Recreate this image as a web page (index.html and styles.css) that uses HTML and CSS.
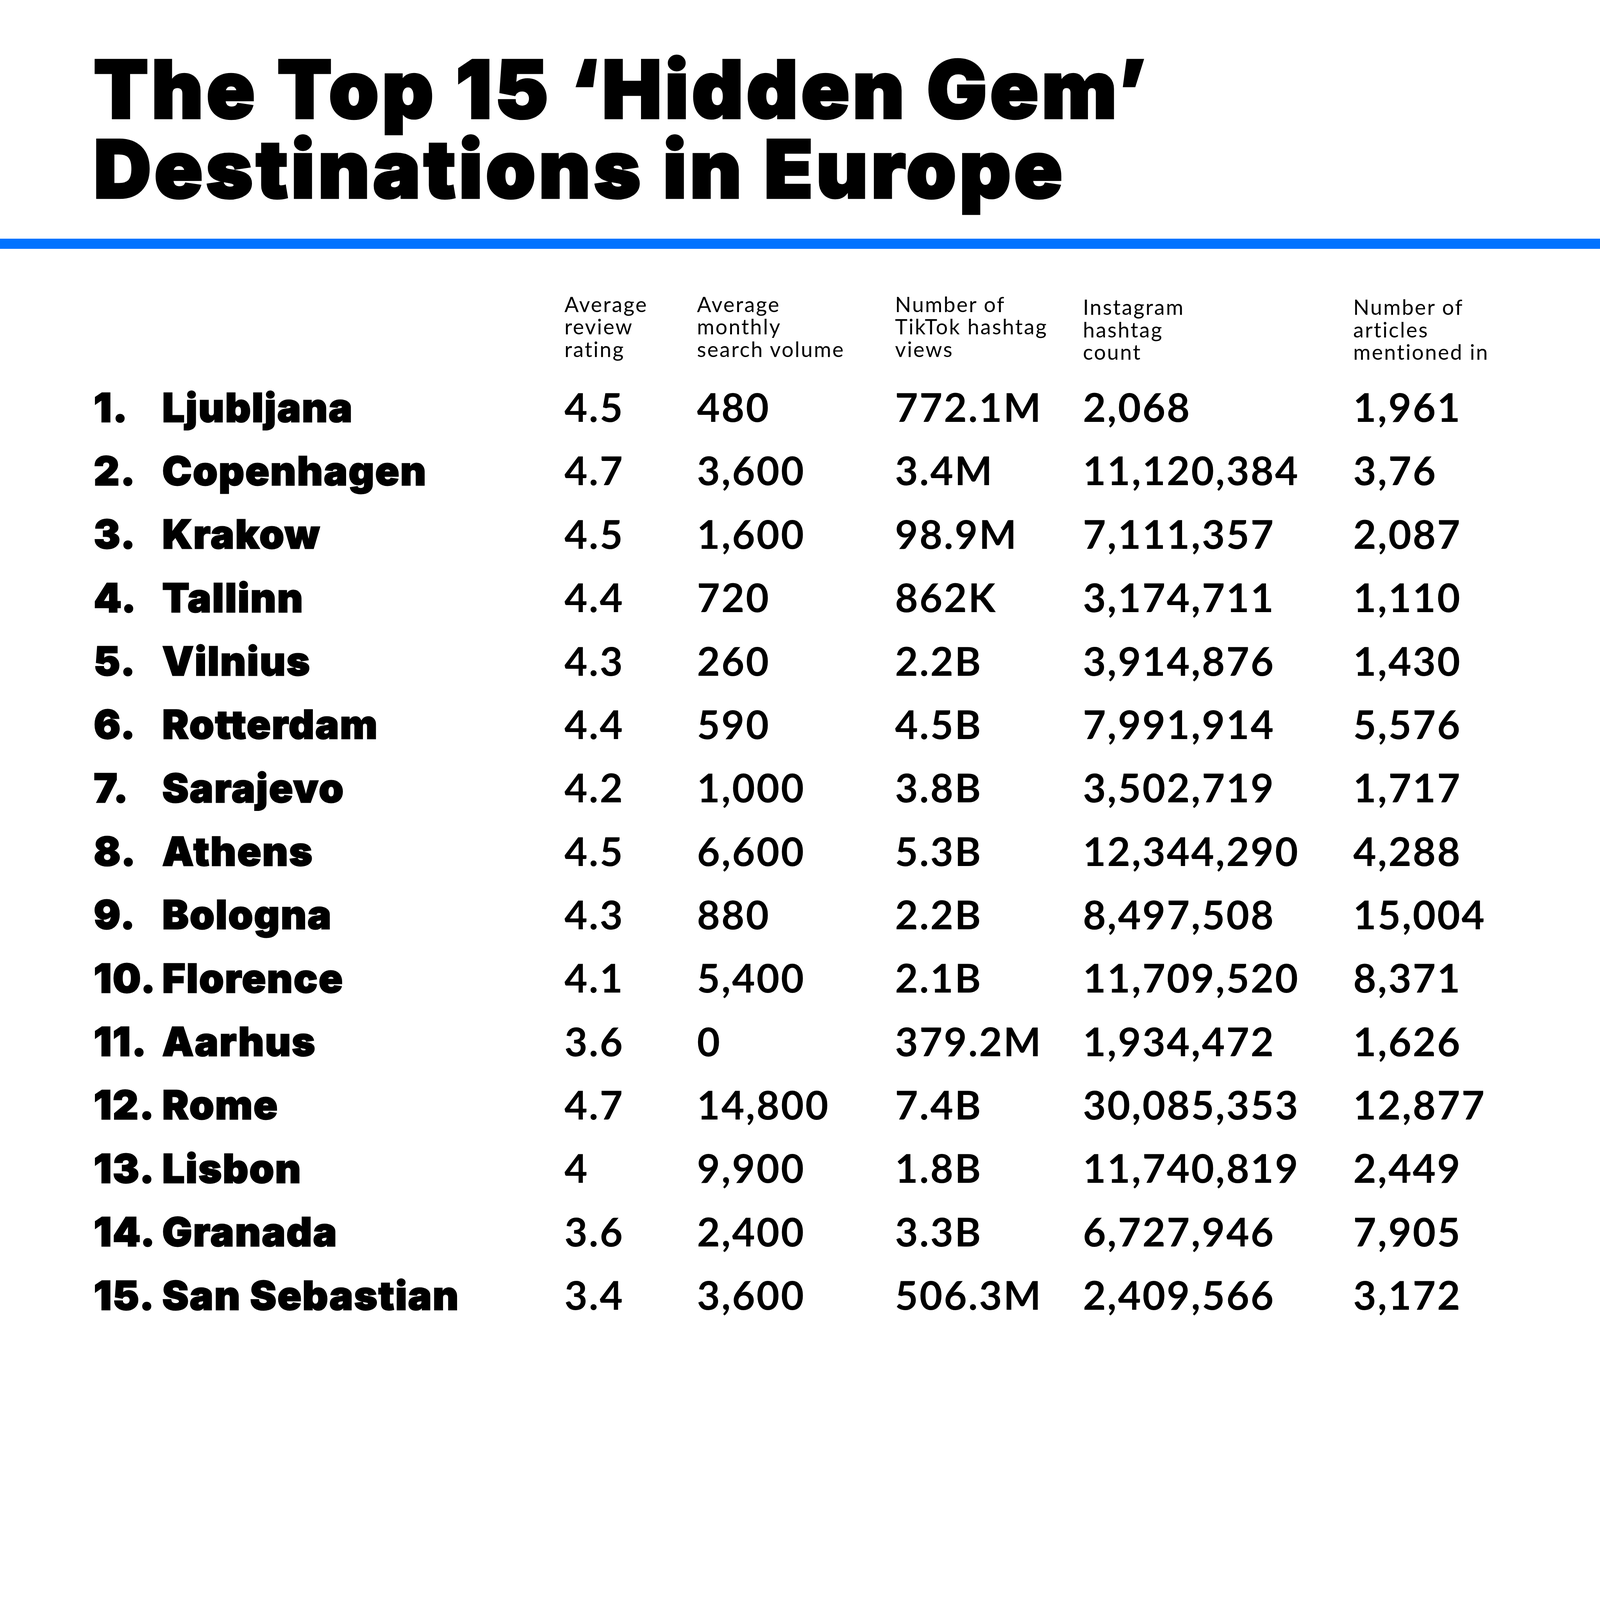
FILE: index.html
```html
<!DOCTYPE html>
<html lang="en">
<head>
<meta charset="utf-8">
<title>The Top 15 'Hidden Gem' Destinations in Europe</title>
<link rel="stylesheet" href="styles.css">
</head>
<body>
<div class="page">
  <h1 class="title"><span class="tline">The Top 15 ‘Hidden Gem’</span><span class="tline">Destinations in Europe</span></h1>
  <div class="bar"></div>
  <div class="table">
    <div class="head">
      <div></div><div></div>
      <div class="h">Average<br>review<br>rating</div>
      <div class="h">Average<br>monthly<br>search volume</div>
      <div class="h">Number of<br>TikTok hashtag<br>views</div>
      <div class="h low">Instagram<br>hashtag<br>count</div>
      <div class="h low">Number of<br>articles<br>mentioned in</div>
    </div>
    <div class="row"><span class="rank">1.</span><span class="name">Ljubljana</span><span class="num">4.5</span><span class="num">480</span><span class="num">772.1M</span><span class="num">2,068</span><span class="num">1,961</span></div>
    <div class="row"><span class="rank">2.</span><span class="name">Copenhagen</span><span class="num">4.7</span><span class="num">3,600</span><span class="num">3.4M</span><span class="num">11,120,384</span><span class="num">3,76</span></div>
    <div class="row"><span class="rank">3.</span><span class="name">Krakow</span><span class="num">4.5</span><span class="num">1,600</span><span class="num">98.9M</span><span class="num">7,111,357</span><span class="num">2,087</span></div>
    <div class="row"><span class="rank">4.</span><span class="name">Tallinn</span><span class="num">4.4</span><span class="num">720</span><span class="num">862K</span><span class="num">3,174,711</span><span class="num">1,110</span></div>
    <div class="row"><span class="rank">5.</span><span class="name">Vilnius</span><span class="num">4.3</span><span class="num">260</span><span class="num">2.2B</span><span class="num">3,914,876</span><span class="num">1,430</span></div>
    <div class="row"><span class="rank">6.</span><span class="name">Rotterdam</span><span class="num">4.4</span><span class="num">590</span><span class="num">4.5B</span><span class="num">7,991,914</span><span class="num">5,576</span></div>
    <div class="row"><span class="rank">7.</span><span class="name">Sarajevo</span><span class="num">4.2</span><span class="num">1,000</span><span class="num">3.8B</span><span class="num">3,502,719</span><span class="num">1,717</span></div>
    <div class="row"><span class="rank">8.</span><span class="name">Athens</span><span class="num">4.5</span><span class="num">6,600</span><span class="num">5.3B</span><span class="num">12,344,290</span><span class="num">4,288</span></div>
    <div class="row"><span class="rank">9.</span><span class="name">Bologna</span><span class="num">4.3</span><span class="num">880</span><span class="num">2.2B</span><span class="num">8,497,508</span><span class="num">15,004</span></div>
    <div class="row"><span class="rank">10.</span><span class="name">Florence</span><span class="num">4.1</span><span class="num">5,400</span><span class="num">2.1B</span><span class="num">11,709,520</span><span class="num">8,371</span></div>
    <div class="row"><span class="rank">11.</span><span class="name">Aarhus</span><span class="num">3.6</span><span class="num">0</span><span class="num">379.2M</span><span class="num">1,934,472</span><span class="num">1,626</span></div>
    <div class="row"><span class="rank">12.</span><span class="name">Rome</span><span class="num">4.7</span><span class="num">14,800</span><span class="num">7.4B</span><span class="num">30,085,353</span><span class="num">12,877</span></div>
    <div class="row"><span class="rank">13.</span><span class="name">Lisbon</span><span class="num">4</span><span class="num">9,900</span><span class="num">1.8B</span><span class="num">11,740,819</span><span class="num">2,449</span></div>
    <div class="row"><span class="rank">14.</span><span class="name">Granada</span><span class="num">3.6</span><span class="num">2,400</span><span class="num">3.3B</span><span class="num">6,727,946</span><span class="num">7,905</span></div>
    <div class="row"><span class="rank">15.</span><span class="name">San Sebastian</span><span class="num">3.4</span><span class="num">3,600</span><span class="num">506.3M</span><span class="num">2,409,566</span><span class="num">3,172</span></div>
  </div>
</div>
</body>
</html>
```
FILE: styles.css
```css
/* 1rem = 1/50 of the viewport width (100px on a 5000px wide window) */
html {
  font-size: 2vw;
}
html, body {
  margin: 0;
  padding: 0;
  background: #ffffff;
}
*, *::before, *::after {
  box-sizing: border-box;
}
.page {
  width: 100%;
  height: 42.92rem;
  background: #ffffff;
  color: #000000;
  font-family: "Lato", "Liberation Sans", sans-serif;
  overflow: hidden;
}
.title {
  margin: 0;
  padding: 1.54rem 0 0 2.93rem;
  height: 6.52rem;
  display: flex;
  flex-direction: column;
  font-family: "Inter", "Liberation Sans", sans-serif;
  font-weight: 900;
  font-size: 2.48rem;
  line-height: 2.49rem;
  letter-spacing: 0.043em;
  -webkit-text-stroke: 0.08rem #000000;
  white-space: nowrap;
}
.tline {
  display: block;
  height: 2.49rem;
}
.bar {
  margin-top: 0.94rem;
  height: 0.31rem;
  background: #0073ff;
}
.table {
  padding: 1.385rem 0 0 2.93rem;
}
.head, .row {
  display: grid;
  grid-template-columns: 2.14rem 12.57rem 4.14rem 6.19rem 5.87rem 8.45rem 1fr;
}
.head {
  height: 2.565rem;
}
.h {
  font-family: "Lato", sans-serif;
  font-weight: 400;
  font-size: 0.66rem;
  line-height: 0.7rem;
  letter-spacing: 0.055em;
  white-space: nowrap;
}
.h.low {
  padding-top: 0.09rem;
}
.row {
  height: 1.982rem;
  line-height: 1.982rem;
  white-space: nowrap;
}
.rank, .name {
  padding-top: 0.03rem;
  font-family: "Inter", "Liberation Sans", sans-serif;
  font-weight: 900;
  font-size: 1.24rem;
  letter-spacing: 0.025em;
  -webkit-text-stroke: 0.035rem #000000;
}
.num {
  font-family: "Lato", sans-serif;
  font-weight: 700;
  font-size: 1.24rem;
  letter-spacing: 0.035em;
}
```
